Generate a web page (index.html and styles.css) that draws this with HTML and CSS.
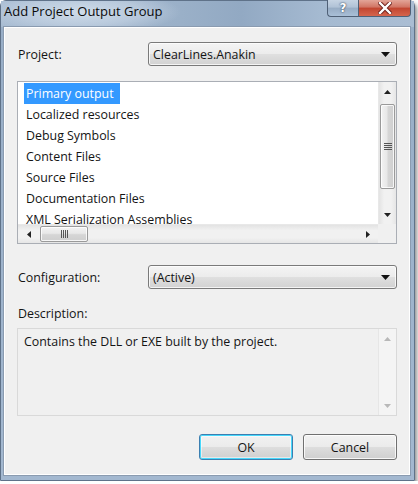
FILE: index.html
```html
<!DOCTYPE html>
<html>
<head>
<meta charset="utf-8">
<link rel="stylesheet" href="styles.css">
</head>
<body>
<div class="window">
  <div class="titlebar">
    <span class="title">Add Project Output Group</span>
    <div class="caption-btns">
      <div class="cbtn help">?</div>
      <div class="cbtn close">
        <svg width="14" height="12" viewBox="0 0 14 12">
          <path d="M2 1 L12 11 M12 1 L2 11" stroke="#6b1f1a" stroke-width="4.2" stroke-linecap="square"/>
          <path d="M2 1 L12 11 M12 1 L2 11" stroke="#ffffff" stroke-width="2.4" stroke-linecap="square"/>
        </svg>
      </div>
    </div>
  </div>
  <div class="client">
    <div class="row">
      <span class="lbl">Project:</span>
      <div class="combo">
        <span class="combo-text">ClearLines.Anakin</span>
        <svg class="drop" width="9" height="5" viewBox="0 0 9 5"><path d="M0 0 H9 L4.5 5 Z" fill="#111"/></svg>
      </div>
    </div>

    <div class="listbox">
      <ul class="items">
        <li><span class="sel">Primary output</span></li>
        <li>Localized resources</li>
        <li>Debug Symbols</li>
        <li>Content Files</li>
        <li>Source Files</li>
        <li>Documentation Files</li>
        <li>XML Serialization Assemblies</li>
      </ul>
      <div class="vscroll">
        <div class="sbtn"><svg width="7" height="4" viewBox="0 0 7 4"><path d="M0 4 H7 L3.5 0 Z" fill="#222"/></svg></div>
        <div class="vtrack">
          <div class="vthumb">
            <svg width="8" height="7" viewBox="0 0 8 7"><path d="M0 0.5 H8 M0 2.5 H8 M0 4.5 H8 M0 6.5 H8" stroke="#555" stroke-width="1"/></svg>
          </div>
        </div>
        <div class="sbtn"><svg width="7" height="4" viewBox="0 0 7 4"><path d="M0 0 H7 L3.5 4 Z" fill="#222"/></svg></div>
      </div>
      <div class="hscroll">
        <div class="hbtn"><svg width="4" height="7" viewBox="0 0 4 7"><path d="M4 0 V7 L0 3.5 Z" fill="#222"/></svg></div>
        <div class="htrack">
          <div class="hthumb">
            <svg width="7" height="8" viewBox="0 0 7 8"><path d="M0.5 0 V8 M2.5 0 V8 M4.5 0 V8 M6.5 0 V8" stroke="#555" stroke-width="1"/></svg>
          </div>
        </div>
        <div class="hbtn"><svg width="4" height="7" viewBox="0 0 4 7"><path d="M0 0 V7 L4 3.5 Z" fill="#222"/></svg></div>
      </div>
      <div class="corner"></div>
    </div>

    <div class="row config">
      <span class="lbl">Configuration:</span>
      <div class="combo">
        <span class="combo-text">(Active)</span>
        <svg class="drop" width="9" height="5" viewBox="0 0 9 5"><path d="M0 0 H9 L4.5 5 Z" fill="#111"/></svg>
      </div>
    </div>

    <div class="lbl desc-lbl">Description:</div>
    <div class="descbox">
      <div class="desc-text">Contains the DLL or EXE built by the project.</div>
      <div class="vscroll disabled">
        <div class="sbtn"><svg width="7" height="4" viewBox="0 0 7 4"><path d="M0 4 H7 L3.5 0 Z" fill="#b8b8b8"/></svg></div>
        <div class="vtrack"></div>
        <div class="sbtn"><svg width="7" height="4" viewBox="0 0 7 4"><path d="M0 0 H7 L3.5 4 Z" fill="#b8b8b8"/></svg></div>
      </div>
    </div>

    <div class="buttons">
      <button class="btn ok">OK</button>
      <button class="btn">Cancel</button>
    </div>
  </div>
</div>
</body>
</html>
```

FILE: styles.css
```css
* { box-sizing: border-box; }
html, body { margin: 0; padding: 0; background: #ffffff; }
body {
  font-family: "Open Sans", "Noto Sans", sans-serif;
  font-size: 12.4px;
  color: #141414;
}
.window {
  width: 415px;
  height: 481px;
  display: flex;
  flex-direction: column;
  border: 1px solid #5f7289;
  border-radius: 6px 6px 0 0;
  background: linear-gradient(180deg, #a4b9d1 0, #98aec7 30px, #a3b8d0 100%);
  box-shadow: 2px 3px 4px rgba(0, 0, 0, 0.45);
  padding: 0 4px 5px 3px;
}
.titlebar {
  height: 26px;
  display: flex;
  align-items: flex-start;
  background:
    radial-gradient(ellipse 100px 22px at 80px 11px, rgba(214, 226, 238, 0.85) 0, rgba(200, 214, 230, 0.6) 60%, rgba(160, 181, 205, 0) 100%),
    linear-gradient(90deg, #a8bcd2 0, #9ab0c8 180px, #92a9c3 240px, #a5bad1 320px, #aabdd3 100%);
  margin: 0 -4px 0 -3px;
  padding: 0 3px 0 3px;
}
.title {
  font-size: 13px;
  line-height: 21px;
  color: #0a0a0a;
}
.caption-btns {
  margin-left: auto;
  display: flex;
  margin-top: -1px;
}
.cbtn {
  height: 17px;
  display: flex;
  align-items: center;
  justify-content: center;
  border: 1px solid #4f6076;
  border-top: none;
}
.help {
  width: 31px;
  border-radius: 0 0 0 4px;
  border-right: none;
  background: linear-gradient(180deg, #c6d4e3 0, #b0c2d6 45%, #97acc4 50%, #a9bfd7 100%);
  color: #fff;
  font-family: "DejaVu Sans", sans-serif;
  font-weight: bold;
  font-size: 12px;
  text-shadow: 0 0 2px #3b4b60, 0 0 1px #3b4b60;
}
.close {
  width: 53px;
  border-radius: 0 0 4px 0;
  background: linear-gradient(180deg, #e3a598 0, #d17463 45%, #c14530 50%, #d5654d 100%);
}
.client {
  flex: 1;
  background: #f0f0f0;
  border: 1px solid #ffffff;
  outline: 1px solid #8a9bb0;
  padding: 14px 12px 14px 12px;
  display: flex;
  flex-direction: column;
}
.row {
  display: flex;
  align-items: center;
  height: 24px;
}
.lbl {
  width: 131px;
  padding-left: 1px;
  flex: none;
}
.combo {
  flex: 1;
  height: 24px;
  border: 1px solid #7a7a7a;
  border-radius: 3px;
  background: linear-gradient(180deg, #f4f4f4 0, #ececec 48%, #dfdfdf 52%, #d2d2d2 100%);
  box-shadow: inset 0 0 0 1px rgba(255, 255, 255, 0.75);
  display: flex;
  align-items: center;
  padding: 0 6px 0 4px;
}
.combo-text { flex: 1; }
.drop { flex: none; }

.listbox {
  margin-top: 15px;
  height: 163px;
  border: 1px solid #aaaeb5;
  background: #fff;
  display: grid;
  grid-template-columns: 1fr 18px;
  grid-template-rows: 1fr 19px;
}
.items {
  list-style: none;
  margin: 0;
  padding: 1px 0 0 6px;
  overflow: hidden;
}
.items li {
  height: 21px;
  line-height: 21px;
  white-space: nowrap;
}
.sel {
  display: inline-block;
  background: #3399ff;
  color: #fff;
  padding: 0 6px 0 2px;
}
.items li:not(:first-child) { padding-left: 2px; }

.vscroll {
  display: flex;
  flex-direction: column;
  background: linear-gradient(90deg, #e3e3e3 0, #f1f1f1 30%, #f1f1f1 70%, #e6e6e6 100%);
  border-left: 1px solid #e8e8e8;
}
.sbtn {
  height: 19px;
  flex: none;
  display: flex;
  align-items: center;
  justify-content: center;
}
.vtrack {
  flex: 1;
  padding: 1px 1px;
}
.vthumb {
  height: 85px;
  border: 1px solid #9a9a9a;
  border-radius: 2px;
  background: linear-gradient(90deg, #f3f3f3 0, #e8e8e8 45%, #d6d6d6 55%, #cfcfcf 100%);
  box-shadow: inset 0 0 0 1px rgba(255, 255, 255, 0.8);
  display: flex;
  align-items: center;
  justify-content: center;
  margin-top: 2px;
}
.hscroll {
  display: flex;
  background: linear-gradient(180deg, #e3e3e3 0, #f1f1f1 30%, #f1f1f1 70%, #e6e6e6 100%);
  border-top: 1px solid #e8e8e8;
}
.hbtn {
  width: 21px;
  flex: none;
  display: flex;
  align-items: center;
  justify-content: center;
}
.htrack { flex: 1; padding: 1px 0; }
.hthumb {
  width: 48px;
  height: 100%;
  border: 1px solid #9a9a9a;
  border-radius: 2px;
  background: linear-gradient(180deg, #f3f3f3 0, #e8e8e8 45%, #d6d6d6 55%, #cfcfcf 100%);
  box-shadow: inset 0 0 0 1px rgba(255, 255, 255, 0.8);
  display: flex;
  align-items: center;
  justify-content: center;
  margin-left: 1px;
}
.corner { background: #f0f0f0; }

.config { margin-top: 21px; }
.desc-lbl {
  margin-top: 17px;
  line-height: 16px;
  height: 16px;
}
.descbox {
  margin-top: 6px;
  height: 88px;
  border: 1px solid #d9d9d9;
  background: #f0f0f0;
  display: flex;
}
.desc-text {
  flex: 1;
  padding: 5px 6px;
  line-height: 16px;
}
.descbox .vscroll {
  width: 18px;
  background: #f4f4f4;
  border-left: 1px solid #e6e6e6;
}
.buttons {
  margin-top: 18px;
  display: flex;
  justify-content: flex-end;
  gap: 10px;
}
.btn {
  width: 94px;
  height: 26px;
  font-family: inherit;
  font-size: 12.4px;
  color: #141414;
  border: 1px solid #707070;
  border-radius: 3px;
  background: linear-gradient(180deg, #f2f2f2 0, #ebebeb 48%, #dddddd 52%, #cfcfcf 100%);
  box-shadow: inset 0 0 0 1px rgba(255, 255, 255, 0.8);
  padding: 0;
}
.btn.ok {
  border-color: #3c7fb1;
  box-shadow: inset 0 0 0 1px #48d8fb, inset 0 0 0 2px rgba(255,255,255,0.5);
}
```
